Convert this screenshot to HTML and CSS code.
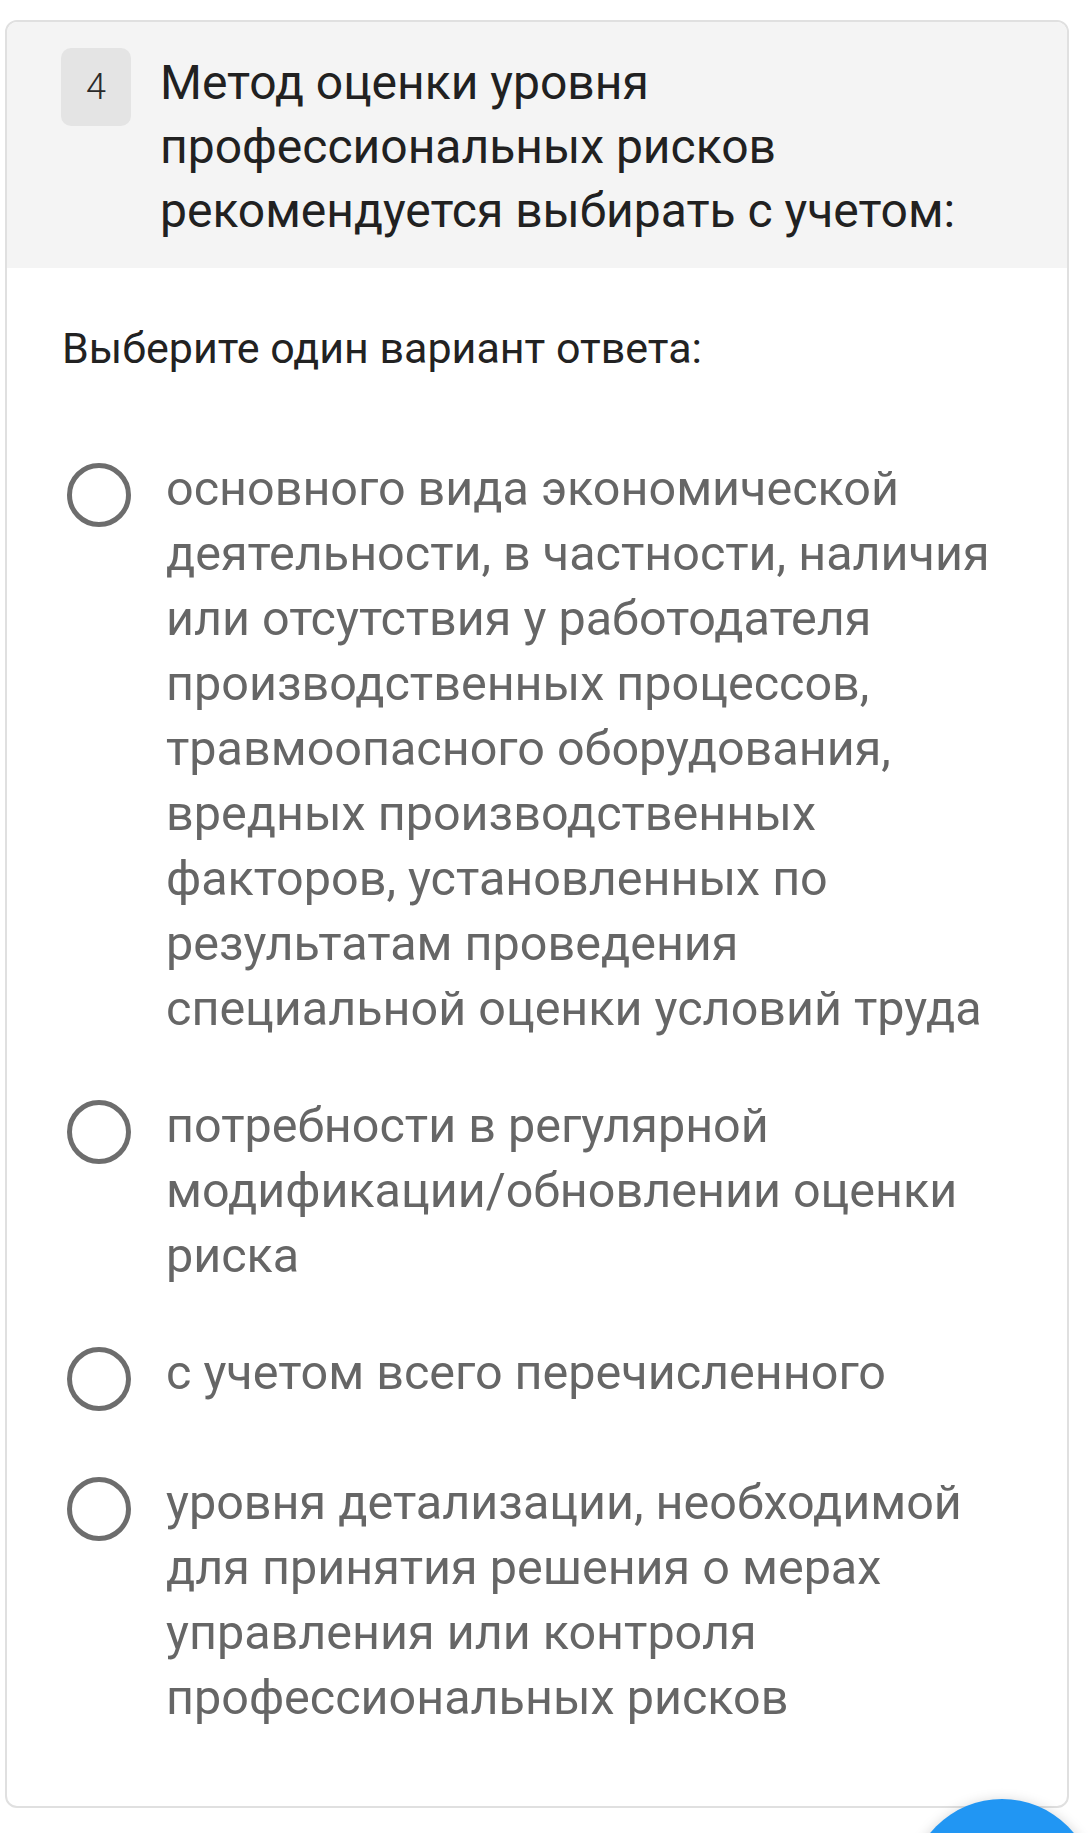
FILE: index.html
```html
<!DOCTYPE html>
<html lang="ru">

<head>
  <meta charset="UTF-8">
  <title>Вопрос 4</title>
  <link rel="stylesheet" href="styles.css">
</head>

<body>
  <div class="question">
    <div class="question-head">
      <div class="question-num">4</div>
      <div class="question-title">Метод оценки уровня профессиональных рисков рекомендуется выбирать с учетом:</div>
    </div>
    <div class="question-body">
      <div class="prompt">Выберите один вариант ответа:</div>
      <div class="answers">
        <label class="answer">
          <input type="radio" name="q4" class="radio">
          <span class="answer-text">основного вида экономической деятельности, в частности, наличия или отсутствия у работодателя производственных процессов, травмоопасного оборудования, вредных производственных факторов, установленных по результатам проведения специальной оценки условий труда</span>
        </label>
        <label class="answer">
          <input type="radio" name="q4" class="radio">
          <span class="answer-text">потребности в регулярной модификации/обновлении оценки риска</span>
        </label>
        <label class="answer">
          <input type="radio" name="q4" class="radio">
          <span class="answer-text">с учетом всего перечисленного</span>
        </label>
        <label class="answer">
          <input type="radio" name="q4" class="radio">
          <span class="answer-text">уровня детализации, необходимой для принятия решения о мерах управления или контроля профессиональных рисков</span>
        </label>
      </div>
    </div>
  </div>

  <button class="fab" aria-label="Далее"></button>
</body>

</html>
```

FILE: styles.css
```css
body {
  margin: 0;
  padding: 20px 19px 0 5px;
  background-color: #ffffff;
  font-family: Roboto, "Noto Sans", sans-serif;
}

.question {
  border: 2px solid #e0e0e0;
  border-radius: 12px;
  overflow: hidden;
  background-color: #fff;
}

.question-head {
  display: flex;
  align-items: flex-start;
  gap: 29px;
  background-color: #f4f4f4;
  padding: 26px 57px 25px 54px;
}

.question-num {
  flex: none;
  width: 70px;
  height: 78px;
  border-radius: 10px;
  background-color: #e4e4e4;
  color: #2a2a2a;
  font-size: 36px;
  font-weight: 300;
  display: flex;
  align-items: center;
  justify-content: center;
}

.question-title {
  padding-top: 3px;
  font-size: 48px;
  line-height: 64px;
  color: #212121;
}

.question-body {
  padding: 53px 64px 76px 55px;
}

.prompt {
  font-size: 43px;
  line-height: 54px;
  color: #222;
}

.answers {
  margin-top: 81px;
  display: flex;
  flex-direction: column;
  gap: 52px;
}

.answer {
  display: flex;
  align-items: flex-start;
  gap: 35px;
  min-height: 78px;
  padding-left: 5px;
  cursor: pointer;
}

.radio {
  appearance: none;
  -webkit-appearance: none;
  flex: none;
  width: 64px;
  height: 64px;
  margin: 7px 0 0;
  border: 5px solid #6d6d6d;
  border-radius: 50%;
  background: #fff;
}

.answer-text {
  font-size: 48.5px;
  line-height: 65px;
  color: #666;
}

.fab {
  position: fixed;
  right: -7px;
  bottom: -152px;
  width: 186px;
  height: 186px;
  border: none;
  border-radius: 50%;
  background-color: #2196f3;
  box-shadow: 0 3px 14px rgba(0, 0, 0, 0.22);
}
```
